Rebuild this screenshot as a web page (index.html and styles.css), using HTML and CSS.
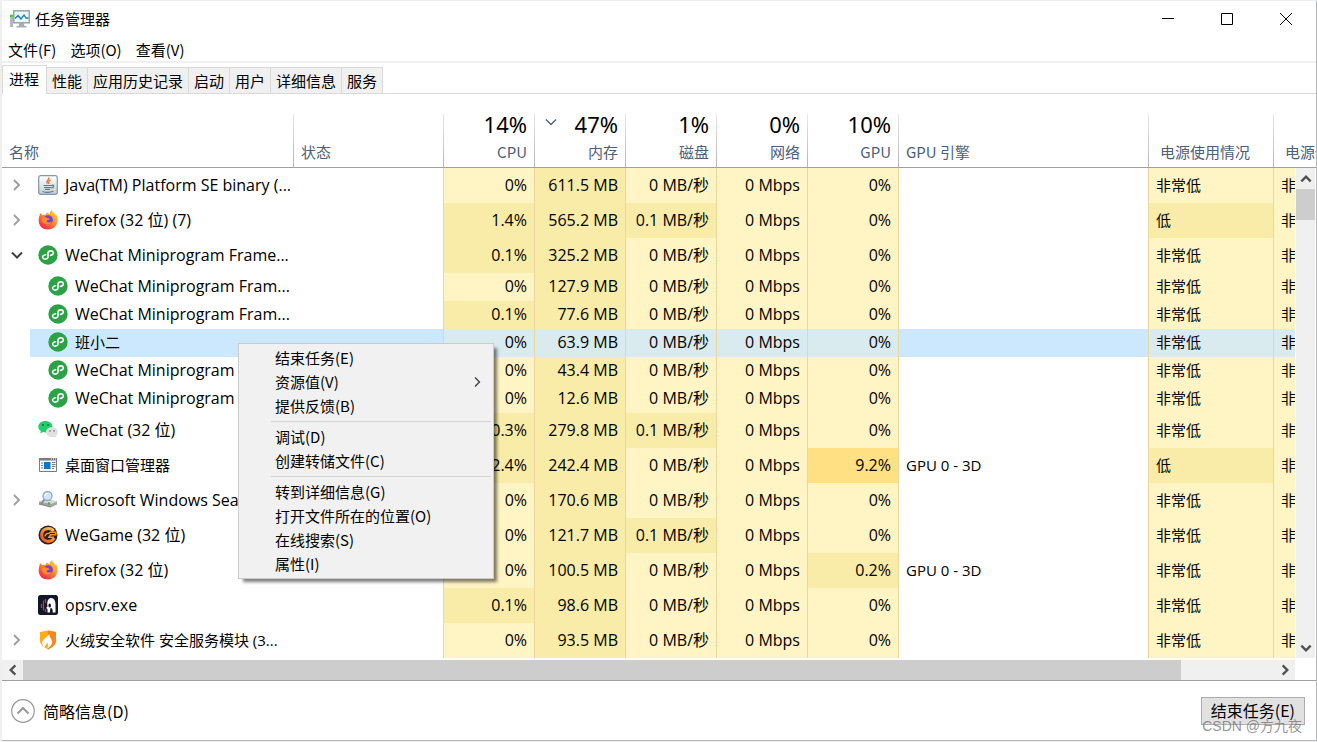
FILE: index.html
```html
<!DOCTYPE html>
<html lang="zh-CN">
<head>
<meta charset="utf-8">
<title>任务管理器</title>
<link rel="stylesheet" href="styles.css">
</head>
<body>
<svg class="defs" aria-hidden="true">
  <defs>
    <linearGradient id="fox" x1="1" y1="0" x2="0.2" y2="1"><stop offset="0" stop-color="#ffe63c"/><stop offset=".45" stop-color="#ff9428"/><stop offset="1" stop-color="#f4204f"/></linearGradient>
    <linearGradient id="cup" x1="0" y1="0" x2="0" y2="1"><stop offset="0" stop-color="#ffffff"/><stop offset="1" stop-color="#c3cdd6"/></linearGradient>
    <linearGradient id="game" x1="0" y1="1" x2="1" y2="0"><stop offset="0" stop-color="#f0472a"/><stop offset=".6" stop-color="#f99a33"/><stop offset="1" stop-color="#ffc64a"/></linearGradient>
    <symbol id="i-right" viewBox="0 0 12 12"><path d="M3 1l5 5-5 5" fill="none" stroke="#a0a0a0" stroke-width="2"/></symbol>
    <symbol id="i-down" viewBox="0 0 12 12"><path d="M1 3.500l5 5 5-5" fill="none" stroke="#404040" stroke-width="2"/></symbol>
    <symbol id="i-java" viewBox="0 0 20 20"><rect x=".7" y=".7" width="18.600" height="18.600" rx="2" fill="url(#cup)" stroke="#8496a6" stroke-width="1.200"/><path d="M10.500 2.500c2 2-3.500 3.200-1 6M12.500 5c-2.800 1.400-1.500 2.200-1.800 4" fill="none" stroke="#ee762c" stroke-width="1.400"/><path d="M5.500 10.500h8.500M6 12.500h7M7 14.300h5M4.500 16.500c3 1 8 1 11-.2M13.800 10.300c3-.8 2.300 2.500-.6 2.500" fill="none" stroke="#56789a" stroke-width="1.200"/></symbol>
    <symbol id="i-fox" viewBox="0 0 20 20"><path d="M1.500 5.500L2.600 3l1.500 2.300c1-.6 2.100-.7 3.300-.4C8 3.500 9 2.600 9.500 2.500c0 1 1.500 1.300 2.500 2C11.500 2 12.500.8 14 0c.2 2 2.500 3 3.500 5l.8-.6C21 10 19.500 19.500 10 19.500 1.500 19.500-.8 12 1.500 5.500z" fill="url(#fox)"/><circle cx="10.300" cy="9.800" r="4.600" fill="#7542d8"/><path d="M3.500 8.500c2-.8 3.500-2 6-.5 1.500.2 2.300.5 1.800 1.200-1 1.300-2.600.6-2.800 2 .8 1.800 3.500 1.500 5.300.5-1 3.300-7.300 4.300-9.600-.2" fill="#ff8a29"/></symbol>
    <symbol id="i-mini" viewBox="0 0 20 20"><circle cx="10" cy="10" r="9.700" fill="#2aa245"/><path d="M7.600 9.700c-2.200.3-3.200 1.600-2.900 2.900.5 2 4.900 2.200 5.300-.6V8c.5-2.800 4.900-2.600 5.300-.5.300 1.400-.8 2.600-2.900 2.900" fill="none" stroke="#fff" stroke-width="1.600" stroke-linecap="round"/></symbol>
    <symbol id="i-chat" viewBox="0 0 20 20"><path d="M7.300 1C3.500 1 .3 3.400.3 6.700c0 2 1 3.400 2.500 4.400L2.300 13.400l2.600-1.300c1 .3 2.500.4 3.500.3 4-.4 6.100-2.700 6.100-5.700C14.500 3.400 11.200 1 7.300 1z" fill="#1fce6d"/><circle cx="5" cy="5" r="1" fill="#0b6b3a"/><circle cx="10" cy="5" r="1" fill="#0b6b3a"/><path d="M13.900 7.200c-3.300 0-5.900 2-5.900 4.900s2.900 5 6.100 5c.8 0 1.600-.1 2.200-.3l2.100 1-.5-1.900c1.400-1 2.100-2.300 2.100-3.800 0-2.900-2.800-4.900-6.100-4.900z" fill="#e0e0e0"/><circle cx="12" cy="10.800" r=".9" fill="#818181"/><circle cx="16" cy="10.800" r=".9" fill="#818181"/></symbol>
    <symbol id="i-desk" viewBox="0 0 20 20"><path d="M1.500 3.500h17v13h-17z" fill="#fafafa" stroke="#777c82"/><path d="M1 3h18v2.500H1z" fill="#777c82"/><path d="M13 4h1M15 4h1M17 4h1" stroke="#fff"/><path d="M6 7h6.500v7H6z" fill="#0078d7"/><path d="M3 8h2M3 10.500h2M3 13h2M14 7.500h3.500M14 9.500h3.500M14 11.500h3.500M14 13.500h2" stroke="#777"/></symbol>
    <symbol id="i-find" viewBox="0 0 20 20"><path d="M1 11.500l8-2.500 10 2.500v3l-6 2.700L1 14z" fill="#a3a7a8"/><path d="M1 11.500l8-2 10 2-6 2.500z" fill="#d8dcdc"/><path d="M1 14l12 3" stroke="#797d7e"/><circle cx="11" cy="13.500" r="1.300" fill="#3ac02d"/><path d="M6.500 9.500l-4 5" stroke="#8a8d91" stroke-width="2"/><circle cx="9.500" cy="6" r="4.500" fill="#cfe6fb" stroke="#94a9bd" stroke-width="1.300"/><path d="M7 6c.3-2 1.500-2.500 3-2.500" fill="none" stroke="#fff" stroke-width="1.200"/></symbol>
    <symbol id="i-game" viewBox="0 0 20 20"><circle cx="10" cy="10" r="9.500" fill="#222127"/><path d="M15.600 6.200C12.500 1.800 4.200 3 3.600 9.800c.2 7.400 9.800 8.600 12.500 3.100" fill="none" stroke="url(#game)" stroke-width="3"/><path d="M7 11.500c.3-2.500 1.700-3.200 4-3.200l1.500-1.100h5.300v2.600h-5.300l-1.500 2.400h5" fill="none" stroke="#f99136" stroke-width="1.600"/></symbol>
    <symbol id="i-op" viewBox="0 0 20 20"><rect width="20" height="20" rx="2.500" fill="#11162a"/><path d="M9.500 17.500V14l-1.500-1 1.500-1.500C8.700 7 10 3 13 3c3.300 0 4.500 3 4.500 6.500v8h-3c.8-2.500-.3-4.500-2-4.800l-.7 4.800z" fill="#fff"/><ellipse cx="11.700" cy="10.400" rx="1.300" ry="2" fill="#11162a"/><path d="M3.500 9v4M5.500 5.500v10M7.500 4v4M7.500 14v3" stroke="#a2493f" stroke-width="1.300"/></symbol>
    <symbol id="i-fire" viewBox="0 0 20 20"><path d="M2 2l8-1.500L18 2v8.500c0 4-3.500 6.700-8 9-4.500-2.300-8-5-8-9z" fill="#ffab19"/><path d="M10 .5L18 2v8.500c0 4-3.500 6.700-8 9z" fill="#fb861c"/><path d="M4.800 10.500L11.500 4c-.3 4.500 2.500 4 2.500 8 0 2.800-1.500 4.500-4.800 6.500 1.300-3.500.8-4.500-.2-6-.3 2.500-2.300 2.500-2 5.300-3-2.300-3.400-5.300-2.200-7.300z" fill="#fff"/></symbol>
  </defs>
</svg>

<div class="window">
  <header class="titlebar">
    <svg class="app-icon" viewBox="0 0 20 18" aria-hidden="true"><path d="M0 4.500h3V17H0z" fill="#b4b8bb"/><path d="M0 6h3" stroke="#37cf31" stroke-width="2"/><path d="M9.500 13h4l1 3h2v1.500h-10V16h2z" fill="#a8acb0"/><rect x="3.800" y=".8" width="15.500" height="12" fill="#eaf7fd" stroke="#9da3a8" stroke-width="1.500"/><path d="M5 8.500l3-3 3 3.500 3-4 2 3h2.500" fill="none" stroke="#117dbb" stroke-width="1.300"/></svg>
    <h1 class="title">任务管理器</h1>
    <div class="window-buttons">
      <button type="button" aria-label="最小化"><svg viewBox="0 0 12 12"><path d="M0 5.500h12"/></svg></button>
      <button type="button" aria-label="最大化"><svg viewBox="0 0 12 12"><path d="M.5.5h11v11H.5z"/></svg></button>
      <button type="button" aria-label="关闭"><svg viewBox="0 0 12 12"><path d="M0 0l12 12M12 0L0 12"/></svg></button>
    </div>
  </header>

  <nav class="menubar">
    <button type="button">文件(F)</button>
    <button type="button">选项(O)</button>
    <button type="button">查看(V)</button>
  </nav>

  <div class="tabs" role="tablist">
    <button type="button" role="tab" class="tab active" aria-selected="true">进程</button>
    <button type="button" role="tab" class="tab">性能</button>
    <button type="button" role="tab" class="tab">应用历史记录</button>
    <button type="button" role="tab" class="tab">启动</button>
    <button type="button" role="tab" class="tab">用户</button>
    <button type="button" role="tab" class="tab">详细信息</button>
    <button type="button" role="tab" class="tab">服务</button>
  </div>

  <main class="processes">
    <table class="grid">
      <colgroup>
        <col class="c-name"><col class="c-status"><col class="c-num"><col class="c-num"><col class="c-num"><col class="c-num"><col class="c-num"><col class="c-engine"><col class="c-power"><col>
      </colgroup>
      <thead>
        <tr>
          <th scope="col">名称</th>
          <th scope="col">状态</th>
          <th scope="col" class="num"><span class="total">14%</span>CPU</th>
          <th scope="col" class="num"><span class="total sorted"><svg viewBox="0 0 12 12" aria-hidden="true"><path d="M1 3.500l5 5 5-5"/></svg>47%</span>内存</th>
          <th scope="col" class="num"><span class="total">1%</span>磁盘</th>
          <th scope="col" class="num"><span class="total">0%</span>网络</th>
          <th scope="col" class="num"><span class="total">10%</span>GPU</th>
          <th scope="col">GPU 引擎</th>
          <th scope="col" class="inset">电源使用情况</th>
          <th scope="col" class="inset">电源使用情况趋势</th>
        </tr>
      </thead>
      <tbody>
        <tr><td><div class="name"><svg class="arrow"><use href="#i-right"/></svg><svg class="icon"><use href="#i-java"/></svg><span>Java(TM) Platform SE binary (...</span></div></td><td></td><td>0%</td><td>611.5 MB</td><td>0 MB/秒</td><td>0 Mbps</td><td>0%</td><td></td><td>非常低</td><td>非常低</td></tr>
        <tr><td><div class="name"><svg class="arrow"><use href="#i-right"/></svg><svg class="icon"><use href="#i-fox"/></svg><span>Firefox (32 位) (7)</span></div></td><td></td><td class="warm">1.4%</td><td>565.2 MB</td><td class="warm">0.1 MB/秒</td><td>0 Mbps</td><td>0%</td><td></td><td class="warm">低</td><td>非常低</td></tr>
        <tr><td><div class="name"><svg class="arrow"><use href="#i-down"/></svg><svg class="icon"><use href="#i-mini"/></svg><span>WeChat Miniprogram Frame...</span></div></td><td></td><td class="warm">0.1%</td><td>325.2 MB</td><td>0 MB/秒</td><td>0 Mbps</td><td>0%</td><td></td><td>非常低</td><td>非常低</td></tr>
        <tr class="child"><td><div class="name"><svg class="icon"><use href="#i-mini"/></svg><span>WeChat Miniprogram Fram...</span></div></td><td></td><td>0%</td><td>127.9 MB</td><td>0 MB/秒</td><td>0 Mbps</td><td>0%</td><td></td><td>非常低</td><td>非常低</td></tr>
        <tr class="child"><td><div class="name"><svg class="icon"><use href="#i-mini"/></svg><span>WeChat Miniprogram Fram...</span></div></td><td></td><td class="warm">0.1%</td><td>77.6 MB</td><td>0 MB/秒</td><td>0 Mbps</td><td>0%</td><td></td><td>非常低</td><td>非常低</td></tr>
        <tr class="child selected"><td><div class="name"><svg class="icon"><use href="#i-mini"/></svg><span class="han">班小二</span></div></td><td></td><td>0%</td><td>63.9 MB</td><td>0 MB/秒</td><td>0 Mbps</td><td>0%</td><td></td><td>非常低</td><td>非常低</td></tr>
        <tr class="child"><td><div class="name"><svg class="icon"><use href="#i-mini"/></svg><span>WeChat Miniprogram Fram...</span></div></td><td></td><td>0%</td><td>43.4 MB</td><td>0 MB/秒</td><td>0 Mbps</td><td>0%</td><td></td><td>非常低</td><td>非常低</td></tr>
        <tr class="child"><td><div class="name"><svg class="icon"><use href="#i-mini"/></svg><span>WeChat Miniprogram Fram...</span></div></td><td></td><td>0%</td><td>12.6 MB</td><td>0 MB/秒</td><td>0 Mbps</td><td>0%</td><td></td><td>非常低</td><td>非常低</td></tr>
        <tr><td><div class="name leaf"><svg class="icon"><use href="#i-chat"/></svg><span>WeChat (32 位)</span></div></td><td></td><td class="warm">0.3%</td><td>279.8 MB</td><td class="warm">0.1 MB/秒</td><td>0 Mbps</td><td>0%</td><td></td><td>非常低</td><td>非常低</td></tr>
        <tr><td><div class="name leaf"><svg class="icon"><use href="#i-desk"/></svg><span class="han">桌面窗口管理器</span></div></td><td></td><td class="warm">2.4%</td><td>242.4 MB</td><td>0 MB/秒</td><td>0 Mbps</td><td class="hot">9.2%</td><td>GPU 0 - 3D</td><td class="warm">低</td><td>非常低</td></tr>
        <tr><td><div class="name"><svg class="arrow"><use href="#i-right"/></svg><svg class="icon"><use href="#i-find"/></svg><span>Microsoft Windows Sear...</span></div></td><td></td><td>0%</td><td>170.6 MB</td><td>0 MB/秒</td><td>0 Mbps</td><td>0%</td><td></td><td>非常低</td><td>非常低</td></tr>
        <tr><td><div class="name leaf"><svg class="icon"><use href="#i-game"/></svg><span>WeGame (32 位)</span></div></td><td></td><td>0%</td><td>121.7 MB</td><td class="warm">0.1 MB/秒</td><td>0 Mbps</td><td>0%</td><td></td><td>非常低</td><td>非常低</td></tr>
        <tr><td><div class="name leaf"><svg class="icon"><use href="#i-fox"/></svg><span>Firefox (32 位)</span></div></td><td></td><td>0%</td><td>100.5 MB</td><td>0 MB/秒</td><td>0 Mbps</td><td class="warm">0.2%</td><td>GPU 0 - 3D</td><td>非常低</td><td>非常低</td></tr>
        <tr><td><div class="name leaf"><svg class="icon"><use href="#i-op"/></svg><span>opsrv.exe</span></div></td><td></td><td class="warm">0.1%</td><td>98.6 MB</td><td>0 MB/秒</td><td>0 Mbps</td><td>0%</td><td></td><td>非常低</td><td>非常低</td></tr>
        <tr><td><div class="name"><svg class="arrow"><use href="#i-right"/></svg><svg class="icon"><use href="#i-fire"/></svg><span class="han">火绒安全软件 安全服务模块 (3...</span></div></td><td></td><td>0%</td><td>93.5 MB</td><td>0 MB/秒</td><td>0 Mbps</td><td>0%</td><td></td><td>非常低</td><td>非常低</td></tr>
      </tbody>
    </table>
    <div class="vscroll">
      <button type="button" aria-label="向上滚动"><svg viewBox="0 0 12 12"><path d="M2 8l4-4 4 4"/></svg></button>
      <div class="vthumb"></div>
      <button type="button" aria-label="向下滚动"><svg viewBox="0 0 12 12"><path d="M2 4l4 4 4-4"/></svg></button>
    </div>
  </main>

  <div class="hscroll">
    <button type="button" aria-label="向左滚动"><svg viewBox="0 0 12 12"><path d="M8 2L4 6l4 4"/></svg></button>
    <div class="htrack"><div class="hthumb"></div></div>
    <button type="button" aria-label="向右滚动"><svg viewBox="0 0 12 12"><path d="M4 2l4 4-4 4"/></svg></button>
  </div>

  <footer class="footer">
    <button type="button" class="fewer"><svg viewBox="0 0 24 24" aria-hidden="true"><circle cx="12" cy="12" r="11.300" stroke-width="1.200"/><path d="M6.500 14.500L12 9l5.500 5.500" stroke-width="2"/></svg>简略信息(D)</button>
    <button type="button" class="end-task">结束任务(E)</button>
    <span class="watermark">CSDN @方九夜</span>
  </footer>

  <div class="context-menu" role="menu">
    <button type="button" role="menuitem">结束任务(E)</button>
    <button type="button" role="menuitem">资源值(V)<svg viewBox="0 0 12 12" aria-hidden="true"><path d="M4 1.500L8.500 6 4 10.500"/></svg></button>
    <button type="button" role="menuitem">提供反馈(B)</button>
    <hr>
    <button type="button" role="menuitem">调试(D)</button>
    <button type="button" role="menuitem">创建转储文件(C)</button>
    <hr>
    <button type="button" role="menuitem">转到详细信息(G)</button>
    <button type="button" role="menuitem">打开文件所在的位置(O)</button>
    <button type="button" role="menuitem">在线搜索(S)</button>
    <button type="button" role="menuitem">属性(I)</button>
  </div>
</div>
</body>
</html>
```

FILE: styles.css
```css
* { box-sizing: border-box; }

body {
  margin: 0;
  min-height: 100vh;
  display: flex;
  background: #efefef;
  color: #000;
  font: 15px/20px "Noto Sans CJK SC", "Noto Sans", sans-serif;
}

button {
  margin: 0;
  padding: 0;
  border: 0;
  background: none;
  color: inherit;
  font: inherit;
}

svg { flex: none; }
.defs { position: absolute; width: 0; height: 0; }

.window {
  position: relative;
  flex: 1;
  min-width: 0;
  margin: 1px 0 1px 2px;
  display: flex;
  flex-direction: column;
  background: #fff;
  border-right: 1px solid #b4b6b9;
  border-bottom: 1px solid #b4b6b9;
}

/* title bar and menus */
.titlebar {
  display: flex;
  align-items: center;
  height: 36px;
  padding: 0 1px 0 8px;
}
.app-icon { width: 20px; height: 18px; }
.title { margin: 0 0 0 5px; font-size: 15px; font-weight: 400; }
.window-buttons { display: flex; margin-left: auto; }
.window-buttons button {
  display: flex;
  align-items: center;
  justify-content: center;
  width: 59px;
  height: 36px;
}
.window-buttons svg { width: 12px; height: 12px; fill: none; stroke: #000; }

.menubar {
  display: flex;
  gap: 14px;
  height: 26px;
  padding: 2px 6px 0;
  border-bottom: 2px solid #f0f0f0;
}

.tabs {
  display: flex;
  align-items: flex-end;
  height: 31px;
  border-bottom: 1px solid #d9d9d9;
}
.tab {
  height: 26px;
  padding: 0 5px;
  border: 1px solid #d9d9d9;
  border-left: 0;
  border-bottom: 0;
  background: #f0f0f0;
}
.tab.active {
  height: 29px;
  padding: 0 7px 2px 6px;
  margin-bottom: -1px;
  border-left: 1px solid #d9d9d9;
  background: #fff;
}

/* process list */
.processes {
  position: relative;
  padding-top: 20px;
  overflow: hidden;
}
.grid {
  width: 100%;
  table-layout: fixed;
  border-collapse: separate;
  border-spacing: 0;
}
.c-name { width: 292px; }
.c-status { width: 150px; }
.c-num { width: 91px; }
.c-engine { width: 250px; }
.c-power { width: 125px; }

th {
  height: 54px;
  padding: 0 7px 5px;
  vertical-align: bottom;
  text-align: left;
  font-weight: 400;
  white-space: nowrap;
  color: #4c607a;
  border-bottom: 1px solid #a0a0a0;
  background: linear-gradient(#e8e8e8, #b4b4b4) right / 1px 100% no-repeat;
}
th.num { padding-right: 8px; text-align: right; }
th.inset { padding-left: 11px; }
th:last-child { background: none; }
.total {
  display: block;
  margin-bottom: 8px;
  color: #000;
  font: 22px/20px "Noto Sans", "Noto Sans CJK SC", sans-serif;
}
.sorted { display: flex; justify-content: space-between; }
.sorted svg { width: 12px; height: 12px; margin: 2px 0 0 3px; fill: none; stroke: #4c607a; stroke-width: 1.3; }

td {
  height: 35px;
  padding: 0 7px 1px;
  white-space: nowrap;
  font: 16px/20px "Open Sans", "Noto Sans CJK SC", sans-serif;
}
td:nth-child(n+2) { border-right: 1px solid #ebd69c; }
td:nth-child(n+3) { background: #fff4c4; text-align: right; }
td:nth-child(n+8) { text-align: left; font-size: 15px; }
td:nth-child(4) { background: #f9eca8; }
td:nth-child(8) { background: #fff; }
td.warm { background: #f9eca8; }
td.hot { background: #ffe184; }
td:first-child { padding: 0 0 1px; }
.han { font-size: 15px; }
.child td { height: 28px; padding-bottom: 2px; }
.child td:first-child { padding-bottom: 2px; }
.selected td,
.selected td:nth-child(8) { background: #cce8ff; }
.selected td:nth-child(n+3):not(:nth-child(8)) { background: #d9ebee; }
.selected td:first-child { background: linear-gradient(to right, #fff 28px, #cce8ff 28px); }

.name { display: flex; align-items: center; padding-left: 9px; }
.arrow { width: 12px; height: 12px; margin-right: 15px; }
.icon { width: 20px; height: 20px; margin-right: 7px; }
.leaf { padding-left: 36px; }
.child .name { padding-left: 46px; }

/* scroll bars */
.vscroll {
  position: absolute;
  top: 74px;
  right: 0;
  bottom: 0;
  width: 21px;
  display: flex;
  flex-direction: column;
  background: #f0f0f0;
  border: solid #fff;
  border-width: 0 1px;
}
.vscroll button { height: 21px; display: flex; align-items: center; justify-content: center; }
.vscroll button:last-child { margin-top: auto; }
.vscroll svg, .hscroll svg { width: 14px; height: 14px; fill: none; stroke: #505050; stroke-width: 2; }
.vthumb { height: 31px; background: #cdcdcd; }

.hscroll {
  display: flex;
  height: 20px;
  margin-top: 2px;
  margin-right: 21px;
  background: #f0f0f0;
}
.hscroll button { width: 21px; display: flex; align-items: center; justify-content: center; }
.htrack { flex: 1; }
.hthumb { width: 92.6%; height: 20px; background: #cdcdcd; }

/* footer */
.footer {
  position: relative;
  flex: 1;
  display: flex;
  align-items: center;
  justify-content: space-between;
  padding: 0 11px 0 9px;
  border-top: 1px solid #a0a0a0;
  font-size: 16px;
}
.fewer { display: flex; align-items: center; gap: 8px; }
.fewer svg { width: 24px; height: 24px; fill: none; stroke: #999; }
.end-task {
  height: 28px;
  padding: 0 9px 1px;
  border: 1px solid #adadad;
  background: #e1e1e1;
}
.watermark {
  position: absolute;
  right: 14px;
  bottom: 4px;
  color: rgba(120, 120, 120, .8);
  font: 14px/20px "Liberation Sans", "Noto Sans CJK SC", sans-serif;
}

/* context menu */
.context-menu {
  position: absolute;
  left: 236px;
  top: 342px;
  width: 256px;
  padding: 2px;
  border: 1px solid #ccc;
  background: #f1f1f1;
  box-shadow: 4px 4px 3px -1px rgba(0, 0, 0, .5);
}
.context-menu button {
  display: flex;
  align-items: center;
  justify-content: space-between;
  width: 100%;
  height: 24px;
  padding: 0 8px 0 34px;
}
.context-menu svg { width: 12px; height: 12px; fill: none; stroke: #333; stroke-width: 1.2; }
.context-menu hr {
  height: 1px;
  margin: 3px 0 3px 30px;
  border: 0;
  background: #d5d5d5;
}
```
